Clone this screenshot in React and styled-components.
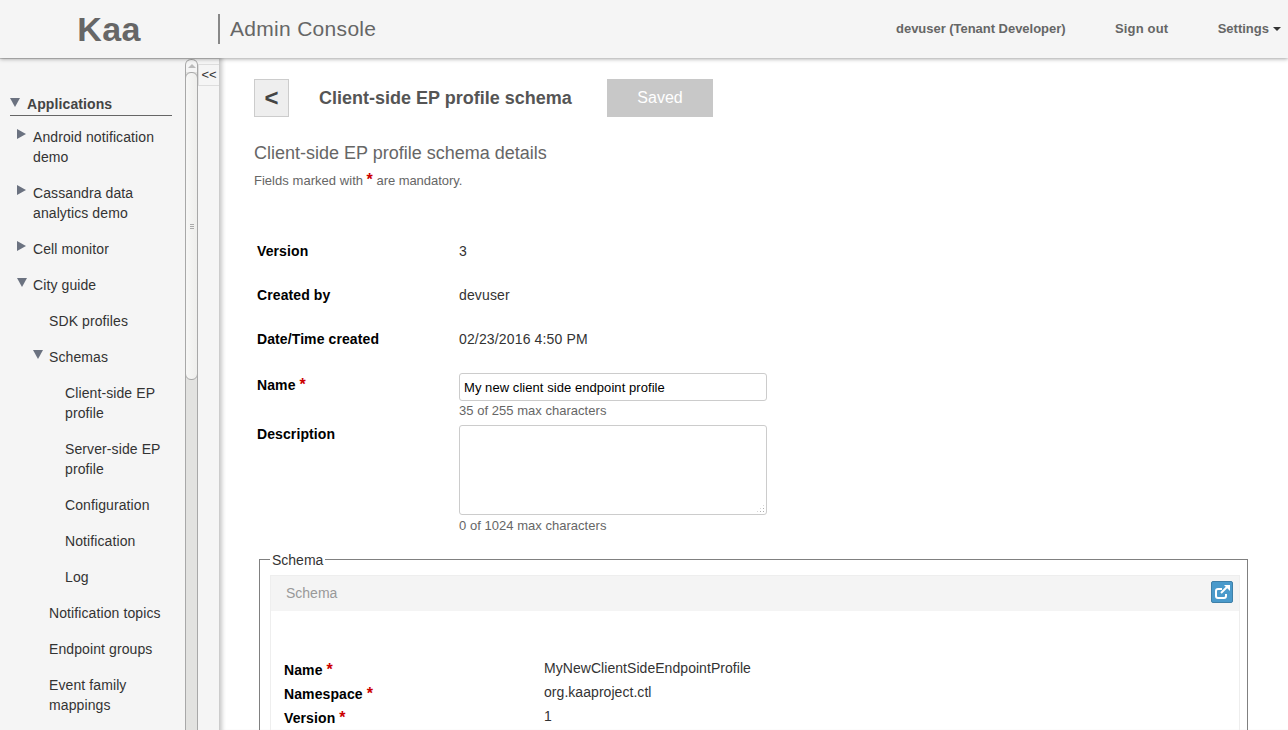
import React from 'react'
import styled, { createGlobalStyle } from 'styled-components'

const GlobalStyle = createGlobalStyle`
  html, body {
    margin: 0;
    height: 100%;
    overflow: hidden;
    background: #fff;
    font-family: "Liberation Sans", Arial, sans-serif;
    font-size: 14px;
    color: #333;
  }
`

const Page = styled.div`
  display: flex;
  flex-direction: column;
  height: 730px;
  overflow: hidden;
`

const Header = styled.header`
  position: relative;
  z-index: 3;
  flex: none;
  display: flex;
  align-items: center;
  height: 58px;
  padding-right: 7px;
  background: #f5f5f5;
  box-shadow: 0 1px 4px rgba(0, 0, 0, 0.35);
  color: #666;
`

const Logo = styled.div`
  width: 218px;
  text-align: center;
  font-size: 34px;
  font-weight: bold;
  letter-spacing: 0.3px;
`

const TitleDivider = styled.div`
  width: 2px;
  height: 30px;
  background: #888;
`

const ConsoleTitle = styled.div`
  margin-left: 10px;
  font-size: 21px;
  letter-spacing: 0.3px;
`

const Nav = styled.nav`
  display: flex;
  align-items: center;
  gap: 49.5px;
  margin-left: auto;
  padding-bottom: 2px;
  font-size: 13px;
  font-weight: bold;
`

const NavItem = styled.span`
  letter-spacing: ${p => p.$spacing || 0}px;
`

const Caret = styled.span`
  display: inline-block;
  margin-left: 4px;
  vertical-align: 2px;
  border-top: 4px solid #333;
  border-left: 4px solid transparent;
  border-right: 4px solid transparent;
`

const Body = styled.div`
  flex: 1;
  display: flex;
  min-height: 0;
`

const Side = styled.aside`
  flex: none;
  display: flex;
  width: 220px;
  background: #f5f5f5;
  border-top: 1px solid #ccc;
  box-sizing: border-box;
`

const Tree = styled.div`
  width: 185px;
  padding: 34px 13px 0 10px;
  box-sizing: border-box;
  overflow: hidden;
`

const TreeHead = styled.div`
  display: flex;
  align-items: center;
  height: 22px;
  margin-bottom: 3px;
  border-bottom: 1px solid #666;
  font-weight: bold;
  letter-spacing: 0.1px;
  color: #444;
`

const TreeItem = styled.div`
  position: relative;
  padding: 8px 0 8px ${p => 23 + p.$depth * 16}px;
  margin-right: ${p => (p.$depth === 2 ? -6 : 0)}px;
  line-height: 20px;
  letter-spacing: 0.1px;
  color: #333;
`

const Arrow = styled.span`
  position: absolute;
  top: ${p => (p.$open ? 11 : 10)}px;
  left: ${p => 7 + p.$depth * 16}px;
  ${p => p.$open
    ? 'border-top: 9px solid #6b7280; border-left: 5px solid transparent; border-right: 5px solid transparent;'
    : 'border-left: 9px solid #6b7280; border-top: 5px solid transparent; border-bottom: 5px solid transparent;'}
`

const HeadArrow = styled.span`
  margin-right: 7px;
  margin-top: -4px;
  border-top: 9px solid #6b7280;
  border-left: 5px solid transparent;
  border-right: 5px solid transparent;
`

const ScrollTrack = styled.div`
  flex: none;
  display: flex;
  flex-direction: column;
  width: 13px;
  box-sizing: border-box;
  background: #e2e2e0;
  border: 1px solid #a8a8a8;
  border-width: 0 1px;
  border-radius: 6px 6px 0 0;
`

const ScrollUp = styled.div`
  flex: none;
  display: flex;
  justify-content: center;
  height: 13px;
  padding-top: 4px;
  box-sizing: border-box;
  background: #f5f5f5;
  border-top: 1px solid #a8a8a8;
  border-radius: 6px 6px 0 0;
  &::before {
    content: '';
    height: 0;
    border-bottom: 4px solid #bbb;
    border-left: 4px solid transparent;
    border-right: 4px solid transparent;
  }
`

const ScrollThumb = styled.div`
  flex: none;
  display: flex;
  flex-direction: column;
  align-items: center;
  justify-content: center;
  gap: 1px;
  height: 308px;
  box-sizing: border-box;
  background: linear-gradient(to right, #f7f7f6, #eeeeec);
  border: 1px solid #a8a8a8;
  border-radius: 6px;
  margin: 0 -1px;
`

const Grip = styled.span`
  width: 4px;
  height: 1px;
  background: #aaa;
`

const Rail = styled.div`
  flex: 1;
  background: #f5f5f5;
  border-right: 1px solid #ccc;
  padding-top: 5px;
`

const Collapse = styled.div`
  height: 20px;
  line-height: 20px;
  text-align: center;
  font-size: 13px;
  color: #333;
  background: #f5f5f5;
  border-top: 1px solid #ddd;
  border-bottom: 1px solid #ddd;
  border-left: 1px solid #ddd;
`

const Main = styled.main`
  flex: 1;
  min-width: 0;
  padding: 21px 39px 0 34px;
  overflow: hidden;
  box-shadow: inset 5px 0 4px -3px rgba(0, 0, 0, 0.22);
`

const TopBar = styled.div`
  display: flex;
  align-items: center;
`

const BackButton = styled.button`
  width: 35px;
  height: 38px;
  padding: 0;
  box-sizing: border-box;
  border: 1px solid #ccc;
  background: #eee;
  color: #444;
  font-family: inherit;
  font-size: 24px;
  font-weight: bold;
`

const PageTitle = styled.h1`
  width: 288px;
  margin: 0 0 0 30px;
  font-size: 18px;
  font-weight: bold;
  color: #555;
`

const SaveButton = styled.button`
  width: 106px;
  height: 38px;
  border: 0;
  background: #c8c8c8;
  color: #fff;
  font-family: inherit;
  font-size: 16px;
`

const SectionTitle = styled.h2`
  margin: 25px 0 0;
  font-size: 18px;
  line-height: 22px;
  font-weight: normal;
  color: #666;
`

const Hint = styled.p`
  margin: 6px 0 0;
  font-size: 13px;
  line-height: 20px;
  color: #666;
`

const HintLead = styled.span`
  word-spacing: 0.3px;
`

const HintTail = styled.span`
  letter-spacing: -0.05px;
`

const Star = styled.span`
  color: #c00;
  font-weight: bold;
  font-size: 16px;
`

const Form = styled.div`
  display: grid;
  grid-template-columns: 202px 308px;
  margin: 38px 0 0 3px;
`

const Label = styled.div`
  margin-top: ${p => p.$lift ? -p.$lift : 0}px;
  padding-top: ${p => p.$top || 0}px;
  line-height: 20px;
  font-weight: bold;
  letter-spacing: 0.1px;
  color: #000;
`

const Field = styled.div`
  padding-top: ${p => p.$top || 0}px;
`

const InfoLabel = styled(Label)`
  height: 44px;
  padding-top: 12px;
  box-sizing: border-box;
`

const InfoValue = styled.div`
  height: 44px;
  padding-top: 12px;
  box-sizing: border-box;
  line-height: 20px;
  letter-spacing: 0.15px;
  color: #333;
`

const TextInput = styled.input`
  display: block;
  width: 100%;
  height: 28px;
  padding: 0 4px;
  box-sizing: border-box;
  border: 1px solid #ccc;
  border-radius: 3px;
  font-family: inherit;
  font-size: 13px;
  letter-spacing: 0.06px;
  color: #000;
`

const AreaWrap = styled.div`
  position: relative;
  height: 90px;
  &::after {
    content: '';
    position: absolute;
    right: 2px;
    bottom: 2px;
    width: 9px;
    height: 9px;
    background: radial-gradient(circle at center, #b0b0b0 0.7px, transparent 0.8px) 0 0 / 3px 3px;
    clip-path: polygon(100% 0, 100% 100%, 0 100%);
  }
`

const TextArea = styled.textarea`
  display: block;
  width: 100%;
  height: 100%;
  padding: 4px;
  margin: 0;
  box-sizing: border-box;
  border: 1px solid #ccc;
  border-radius: 3px;
  font-family: inherit;
  resize: none;
`

const Counter = styled.div`
  height: 24px;
  padding-top: ${p => p.$top || 2}px;
  box-sizing: border-box;
  font-size: 13px;
  line-height: 16px;
  letter-spacing: 0.03px;
  color: #666;
`

const SchemaSet = styled.fieldset`
  width: 989px;
  margin: 9px 0 0 5px;
  padding: 0 7px 0 10px;
  box-sizing: border-box;
  border: 1px solid #808080;
  min-inline-size: 0;
`

const SchemaLegend = styled.legend`
  margin-left: 0;
  padding: 2px 2px 0;
  font-size: 14px;
  line-height: 20px;
  color: #333;
`

const Panel = styled.div`
  margin-top: 5px;
  height: 300px;
  border: 1px solid #eee;
  border-bottom: 0;
`

const PanelHead = styled.div`
  display: flex;
  align-items: center;
  justify-content: space-between;
  height: 35px;
  padding: 0 6px 2px 15px;
  box-sizing: border-box;
  background: #f4f4f4;
  color: #999;
`

const IconButton = styled.button`
  align-self: flex-start;
  margin-top: 5px;
  width: 22px;
  height: 22px;
  padding: 0;
  box-sizing: border-box;
  border: 1px solid #3f80a8;
  border-radius: 2px;
  background: #4a9acb;
  svg {
    display: block;
  }
`

const SchemaRows = styled.div`
  display: grid;
  grid-template-columns: 260px 1fr;
  grid-auto-rows: 24px;
  margin: 47px 0 0 13px;
`

const SchemaLabel = styled.div`
  padding-top: 2px;
  line-height: 20px;
  font-weight: bold;
  letter-spacing: 0.1px;
  color: #000;
`

const SchemaValue = styled.div`
  line-height: 20px;
  letter-spacing: 0.05px;
  color: #333;
`

const items = [
  { label: 'Android notification demo', depth: 0, arrow: 'closed' },
  { label: 'Cassandra data analytics demo', depth: 0, arrow: 'closed' },
  { label: 'Cell monitor', depth: 0, arrow: 'closed' },
  { label: 'City guide', depth: 0, arrow: 'open' },
  { label: 'SDK profiles', depth: 1 },
  { label: 'Schemas', depth: 1, arrow: 'open' },
  { label: 'Client-side EP profile', depth: 2 },
  { label: 'Server-side EP profile', depth: 2 },
  { label: 'Configuration', depth: 2 },
  { label: 'Notification', depth: 2 },
  { label: 'Log', depth: 2 },
  { label: 'Notification topics', depth: 1 },
  { label: 'Endpoint groups', depth: 1 },
  { label: 'Event family mappings', depth: 1 },
]

const schemaFields = [
  ['Name', 'MyNewClientSideEndpointProfile'],
  ['Namespace', 'org.kaaproject.ctl'],
  ['Version', '1'],
]

function App() {
  return (
    <Page>
      <GlobalStyle />
      <Header>
        <Logo>Kaa</Logo>
        <TitleDivider />
        <ConsoleTitle>Admin Console</ConsoleTitle>
        <Nav>
          <NavItem $spacing={-0.03}>devuser (Tenant Developer)</NavItem>
          <NavItem $spacing={0.15}>Sign out</NavItem>
          <NavItem>Settings<Caret /></NavItem>
        </Nav>
      </Header>
      <Body>
        <Side>
          <Tree>
            <TreeHead><HeadArrow />Applications</TreeHead>
            {items.map(item => (
              <TreeItem key={item.label} $depth={item.depth}>
                {item.arrow && <Arrow $depth={item.depth} $open={item.arrow === 'open'} />}
                {item.label}
              </TreeItem>
            ))}
          </Tree>
          <ScrollTrack>
            <ScrollUp />
            <ScrollThumb>
              <Grip /><Grip /><Grip />
            </ScrollThumb>
          </ScrollTrack>
          <Rail>
            <Collapse>&lt;&lt;</Collapse>
          </Rail>
        </Side>
        <Main>
          <TopBar>
            <BackButton>&lt;</BackButton>
            <PageTitle>Client-side EP profile schema</PageTitle>
            <SaveButton>Saved</SaveButton>
          </TopBar>
          <SectionTitle>Client-side EP profile schema details</SectionTitle>
          <Hint><HintLead>Fields marked with</HintLead> <Star>*</Star> <HintTail>are mandatory.</HintTail></Hint>
          <Form>
            <InfoLabel>Version</InfoLabel>
            <InfoValue>3</InfoValue>
            <InfoLabel>Created by</InfoLabel>
            <InfoValue>devuser</InfoValue>
            <InfoLabel>Date/Time created</InfoLabel>
            <InfoValue>02/23/2016 4:50 PM</InfoValue>
            <Label $top={14}>Name <Star>*</Star></Label>
            <Field $top={12}>
              <TextInput defaultValue="My new client side endpoint profile" />
              <Counter>35 of 255 max characters</Counter>
            </Field>
            <Label $lift={1}>Description</Label>
            <Field>
              <AreaWrap>
                <TextArea />
              </AreaWrap>
              <Counter $top={3}>0 of 1024 max characters</Counter>
            </Field>
          </Form>
          <SchemaSet>
            <SchemaLegend>Schema</SchemaLegend>
            <Panel>
              <PanelHead>
                Schema
                <IconButton aria-label="Open">
                  <svg width="20" height="20" viewBox="0 0 20 20" fill="none" stroke="#fff" strokeWidth="2">
                    <path d="M10 7H6A2 2 0 0 0 4 9V14A2 2 0 0 0 6 16H12A2 2 0 0 0 14 14V12" />
                    <path d="M9 11L15.500 4.500" />
                    <path d="M12 3H18V9Z" fill="#fff" stroke="none" />
                  </svg>
                </IconButton>
              </PanelHead>
              <SchemaRows>
                {schemaFields.map(([name, value]) => (
                  <React.Fragment key={name}>
                    <SchemaLabel>{name} <Star>*</Star></SchemaLabel>
                    <SchemaValue>{value}</SchemaValue>
                  </React.Fragment>
                ))}
              </SchemaRows>
            </Panel>
          </SchemaSet>
        </Main>
      </Body>
    </Page>
  )
}

export default App
